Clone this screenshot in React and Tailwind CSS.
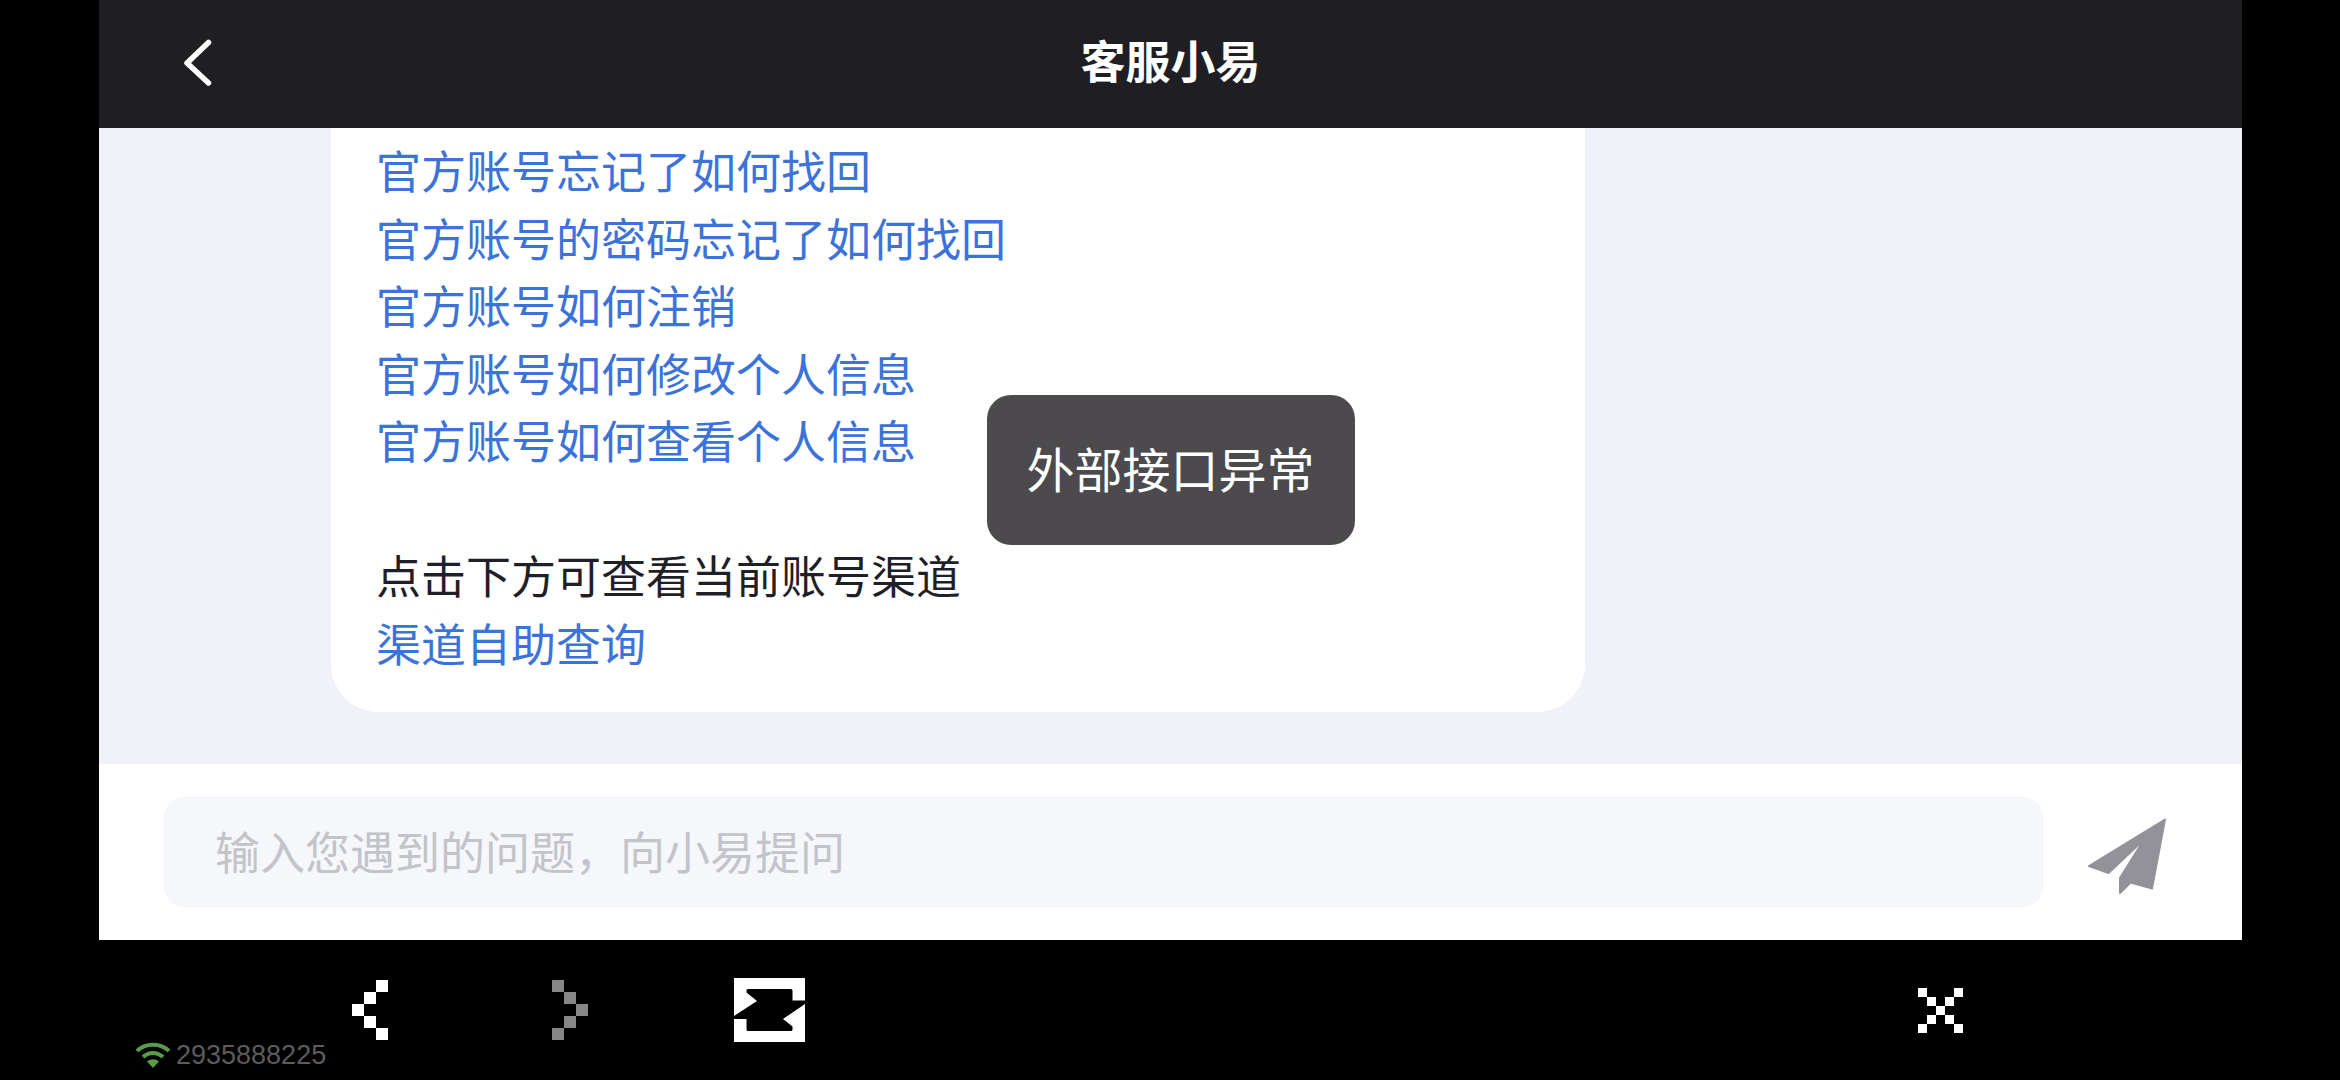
import { useState } from 'react';

const FAQ_LINKS = [
  '官方账号忘记了如何找回',
  '官方账号的密码忘记了如何找回',
  '官方账号如何注销',
  '官方账号如何修改个人信息',
  '官方账号如何查看个人信息',
];

// Each string is one row of blocks, '#' is filled
const PIXEL_LEFT = ['..#', '.#.', '#..', '.#.', '..#'];
const PIXEL_RIGHT = ['#..', '.#.', '..#', '.#.', '#..'];
const PIXEL_CLOSE = ['#...#', '.#.#.', '..#..', '.#.#.', '#...#'];

function PixelIcon({ rows, className }) {
  return (
    <svg
      viewBox={`0 0 ${rows[0].length} ${rows.length}`}
      className={className}
      fill="currentColor"
      shapeRendering="crispEdges"
      aria-hidden="true"
    >
      {rows.map((row, y) =>
        row.split('').map((c, x) =>
          c === '#' ? <rect key={`${x}-${y}`} x={x} y={y} width="1" height="1" /> : null
        )
      )}
    </svg>
  );
}

function Header() {
  return (
    <header className="grid h-32 grid-cols-[1fr_auto_1fr] items-center bg-[#1e1e23] px-[73px] pb-1 text-white">
      <button type="button" aria-label="返回" className="justify-self-start">
        <svg className="h-12 w-12" viewBox="0 0 48 48" fill="none" stroke="currentColor" strokeWidth="5.5" strokeLinecap="round" strokeLinejoin="round">
          <path d="M36.500 4.500L15 25L36.500 45" />
        </svg>
      </button>
      <h1 className="pb-1 text-[45px] font-bold leading-normal">客服小易</h1>
    </header>
  );
}

function Messages() {
  return (
    <main className="grow bg-[#f1f2f7] pb-[52px] pl-[232px] pr-[657px]">
      <div className="rounded-b-[48px] bg-white px-[45px] pb-9 pt-2 text-[45px] leading-normal text-[#1f1f2a]">
        <ul>
          {FAQ_LINKS.map((text) => (
            <li key={text}>
              <a href="#faq" className="text-[#3c73d9]">{text}</a>
            </li>
          ))}
        </ul>
        <br />
        <p>点击下方可查看当前账号渠道</p>
        <a href="#channel" className="text-[#3c73d9]">渠道自助查询</a>
      </div>
    </main>
  );
}

function Composer() {
  const [value, setValue] = useState('');

  return (
    <form className="flex items-center bg-white py-8 pl-16 pr-[74px]" onSubmit={(e) => e.preventDefault()}>
      <input
        type="text"
        aria-label="输入您遇到的问题"
        placeholder="输入您遇到的问题，向小易提问"
        value={value}
        onChange={(e) => setValue(e.target.value)}
        className="h-28 min-w-0 grow rounded-3xl bg-[#f5f7fb] px-[52px] pb-1 text-[45px] text-[#1f1f2a] outline-none placeholder:text-[#c3c4c9]"
      />
      <button type="submit" aria-label="发送" className="ml-10 text-[#929298]">
        <svg className="h-[88px] w-[84px]" viewBox="0 0 84 88" fill="currentColor" stroke="currentColor" strokeWidth="2" strokeLinejoin="round">
          <path d="M81 11.500L5 58L24.500 65L60 31.500L36 70V85L46.500 74.500L68 80.500Z" />
        </svg>
      </button>
    </form>
  );
}

function Toast({ children }) {
  return (
    <div role="status" className="absolute left-1/2 top-1/2 -translate-x-1/2 -translate-y-1/2 whitespace-nowrap rounded-3xl bg-[#4c4a4d] px-10 pb-[42px] pt-9 text-5xl leading-[72px] text-white">
      {children}
    </div>
  );
}

function BrowserBar() {
  return (
    <nav className="relative flex h-[140px] items-center justify-between pl-[334px] pr-[364px] text-white">
      <div className="flex items-center gap-32">
        <button type="button" aria-label="后退" className="flex w-[72px] justify-center">
          <PixelIcon rows={PIXEL_LEFT} className="h-[60px] w-9" />
        </button>
        <button type="button" aria-label="前进" className="flex w-[72px] justify-center text-[#868686]">
          <PixelIcon rows={PIXEL_RIGHT} className="h-[60px] w-9" />
        </button>
        <button type="button" aria-label="刷新" className="flex w-[72px] items-center justify-center">
          <svg className="h-16 w-[72px]" viewBox="0 0 72 64" aria-hidden="true">
            <rect width="71" height="64" fill="#fff" />
            <path
              d="M14 11H57Q58.500 11 58.500 12.500V22.500H71V26L49 41L58.500 48.500V51.500Q58.500 53 57 53H14Q12.500 53 12.500 51.500V41H0V38L23 23L12.500 14.500V12.500Q12.500 11 14 11Z"
              fill="#000"
            />
          </svg>
        </button>
      </div>
      <button type="button" aria-label="关闭" className="flex w-[72px] justify-center">
        <PixelIcon rows={PIXEL_CLOSE} className="h-[45px] w-[45px]" />
      </button>

      {/* connection status over the bar */}
      <div className="absolute bottom-[7px] left-[135px] flex items-center gap-[5px] text-[27px] leading-9 text-[#5c5c5c]">
        <svg className="h-7 w-9" viewBox="0 0 36 28" fill="none" stroke="#5b9a49" strokeWidth="4" aria-hidden="true">
          <path d="M2 10C10 1.500 26 1.500 34 10" />
          <path d="M8 16C13.500 10.500 22.500 10.500 28 16" />
          <path d="M12 20.500C15.500 17.500 20.500 17.500 24 20.500L18 27Z" fill="#5b9a49" stroke="none" />
        </svg>
        <span className="font-['Liberation_Sans',sans-serif]">2935888225</span>
      </div>
    </nav>
  );
}

export default function App() {
  return (
    <div className="flex min-h-screen flex-col bg-black font-['Noto_Sans_CJK_SC',sans-serif]">
      <div className="relative ml-[99px] mr-[98px] flex grow flex-col">
        <Header />
        <Messages />
        <Composer />
        <Toast>外部接口异常</Toast>
      </div>
      <BrowserBar />
    </div>
  );
}
